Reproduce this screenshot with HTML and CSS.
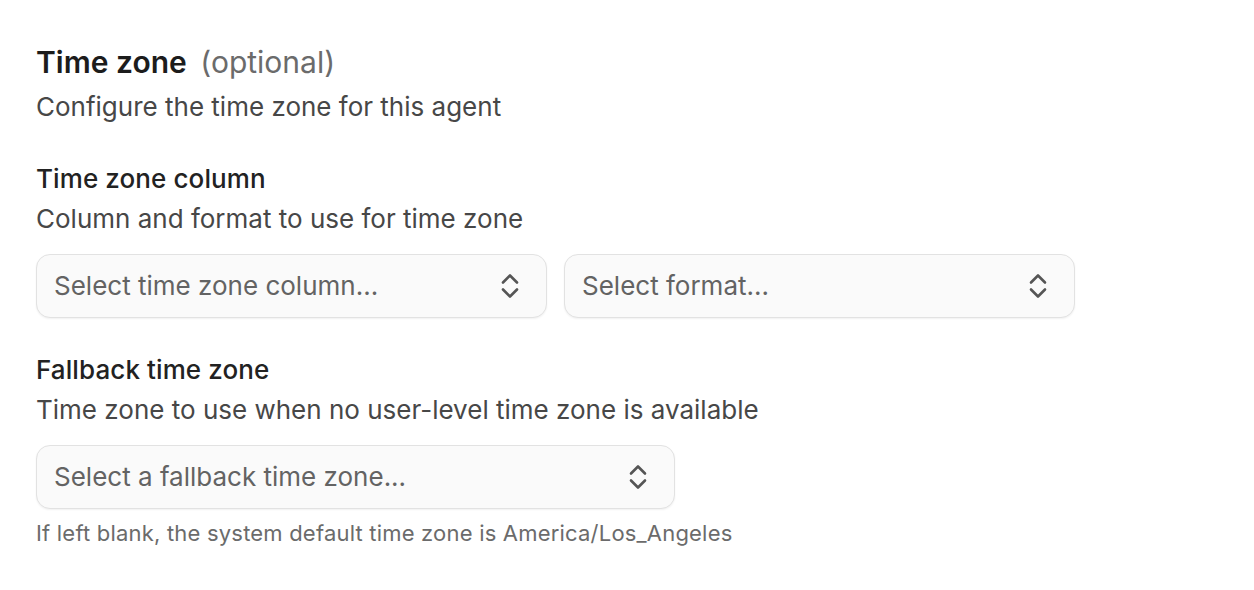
FILE: index.html
```html
<!DOCTYPE html>
<html lang="en">
<head>
<meta charset="utf-8">
<title>Time zone</title>
<link rel="stylesheet" href="styles.css">
</head>
<body>
<main class="panel">
  <header class="section-head">
    <h1 class="title">Time zone <span class="optional">(optional)</span></h1>
    <p class="desc">Configure the time zone for this agent</p>
  </header>

  <section class="field">
    <h2 class="label">Time zone column</h2>
    <p class="desc">Column and format to use for time zone</p>
    <div class="select-row">
      <button class="select wide" type="button">
        <span class="placeholder">Select time zone column...</span>
        <svg class="chev" width="20" height="28" viewBox="0 0 20 28" fill="none" stroke="currentColor" stroke-width="2.6" stroke-linecap="round" stroke-linejoin="round"><path d="M3 10.5L10 3.5L17 10.5"/><path d="M3 17.5L10 24.5L17 17.5"/></svg>
      </button>
      <button class="select wide" type="button">
        <span class="placeholder">Select format...</span>
        <svg class="chev" width="20" height="28" viewBox="0 0 20 28" fill="none" stroke="currentColor" stroke-width="2.6" stroke-linecap="round" stroke-linejoin="round"><path d="M3 10.5L10 3.5L17 10.5"/><path d="M3 17.5L10 24.5L17 17.5"/></svg>
      </button>
    </div>
  </section>

  <section class="field second">
    <h2 class="label">Fallback time zone</h2>
    <p class="desc">Time zone to use when no user-level time zone is available</p>
    <div class="select-row">
      <button class="select medium" type="button">
        <span class="placeholder">Select a fallback time zone...</span>
        <svg class="chev" width="20" height="28" viewBox="0 0 20 28" fill="none" stroke="currentColor" stroke-width="2.6" stroke-linecap="round" stroke-linejoin="round"><path d="M3 10.5L10 3.5L17 10.5"/><path d="M3 17.5L10 24.5L17 17.5"/></svg>
      </button>
    </div>
    <p class="hint">If left blank, the system default time zone is America/Los_Angeles</p>
  </section>
</main>
</body>
</html>
```

FILE: styles.css
```css
* { box-sizing: border-box; }

html, body {
  margin: 0;
  padding: 0;
  background: #ffffff;
}

body {
  font-family: Inter, "Noto Sans", "Liberation Sans", sans-serif;
  color: #1f1f1f;
}

.panel {
  padding: 44px 36px 0 36px;
}

.title {
  margin: 0;
  font-size: 30px;
  line-height: 36px;
  font-weight: 600;
  color: #1c1c1c;
}

.optional {
  font-weight: 400;
  color: #6b6b6b;
  margin-left: 6px;
}

.desc {
  margin: 0;
  font-size: 26px;
  line-height: 32px;
  font-weight: 400;
  color: #474747;
}

.section-head .desc {
  margin-top: 11px;
}

.field {
  margin-top: 40px;
}

.field.second {
  margin-top: 36px;
}

.label {
  margin: 0 0 8px 0;
  font-size: 26px;
  line-height: 32px;
  font-weight: 450;
  color: #222222;
  letter-spacing: 0.1px;
}

.select-row {
  display: flex;
  gap: 17px;
  margin-top: 19px;
}

.select {
  display: flex;
  align-items: center;
  justify-content: space-between;
  height: 64px;
  padding: 0 26px 0 17px;
  background: #fafafa;
  border: 1px solid #e2e2e2;
  border-radius: 14px;
  box-shadow: 0 1px 2px rgba(0, 0, 0, 0.06);
  font-family: inherit;
  cursor: pointer;
}

.select.wide { width: 511px; }
.select.medium { width: 639px; }

.placeholder {
  font-size: 26px;
  line-height: 32px;
  color: #636363;
}

.chev {
  color: #555555;
  flex: none;
}

.hint {
  margin: 10px 0 0 0;
  font-size: 22px;
  line-height: 28px;
  color: #6b6b6b;
  letter-spacing: 0.2px;
}
```
